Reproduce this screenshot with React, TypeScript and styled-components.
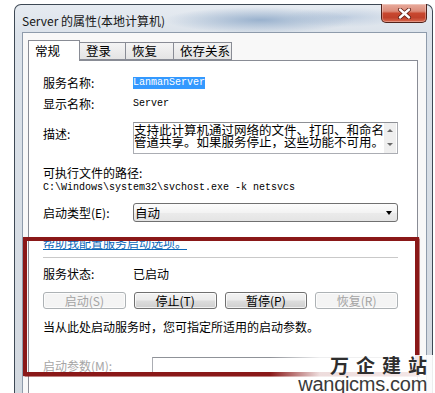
import React from "react";
import styled, { createGlobalStyle } from "styled-components";

const GlobalStyle = createGlobalStyle`
  html, body { margin: 0; padding: 0; background: #ffffff; }
  body {
    font-family: "Noto Sans CJK SC", "Noto Sans", sans-serif;
    font-size: 12px;
    color: #000;
  }
  * { box-sizing: border-box; }
`;

const Stage = styled.div`
  position: relative;
  width: 435px;
  height: 393px;
  overflow: hidden;
  background: #ffffff;
  padding: 4px 0 0 14px;
`;

const Window = styled.div`
  width: 419px;
  height: 400px;
  border: 1px solid #3e4955;
  border-bottom: none;
  border-radius: 7px 7px 0 0;
  background:
    radial-gradient(ellipse 95px 13px at 245px 15px, rgba(130, 160, 195, 0.75), rgba(130, 160, 195, 0) 100%),
    radial-gradient(ellipse 60px 10px at 330px 12px, rgba(170, 190, 215, 0.6), rgba(170, 190, 215, 0) 100%),
    linear-gradient(to bottom, #e6ebf1 0px, #dbe2ea 30px, #d2d8df 100%);
  display: flex;
  flex-direction: column;
`;

const TitleBar = styled.div`
  height: 27px;
  flex-shrink: 0;
  display: flex;
  align-items: flex-start;
  padding: 0 5px 0 7px;
`;

const Title = styled.div`
  margin-top: 8px;
  font-size: 12px;
  line-height: 16px;
  color: #151515;
  white-space: nowrap;
`;

const CloseButton = styled.div`
  margin-left: auto;
  margin-top: -1px;
  width: 46px;
  height: 19px;
  border: 1px solid #50211a;
  border-top: none;
  border-radius: 0 0 5px 5px;
  background: linear-gradient(
    to bottom,
    #e8ab9d 0%,
    #dc8c7a 40%,
    #c8472f 52%,
    #c0412b 75%,
    #d9694f 100%
  );
  box-shadow: inset 0 0 0 1px rgba(255, 255, 255, 0.3);
  display: flex;
  align-items: center;
  justify-content: center;
`;

const ClientArea = styled.div`
  flex: 1;
  margin: 0 5px 0 7px;
  border: 1px solid #8e9bab;
  border-bottom: none;
  background: #f8f8f8;
  padding: 7px 8px 0 5px;
  display: flex;
  flex-direction: column;
`;

const TabRow = styled.div`
  display: flex;
  align-items: flex-end;
  height: 21px;
  margin-bottom: -1px;
  position: relative;
  z-index: 1;
`;

const Tab = styled.div<{ $active?: boolean; $w: number }>`
  width: ${(p) => p.$w}px;
  height: ${(p) => (p.$active ? 21 : 18)}px;
  margin-bottom: ${(p) => (p.$active ? 0 : 1)}px;
  margin-right: -1px;
  border: 1px solid #898c95;
  border-bottom: ${(p) => (p.$active ? "none" : "1px solid #898c95")};
  background: ${(p) =>
    p.$active ? "#ffffff" : "linear-gradient(to bottom, #f4f4f4, #e4e4e4)"};
  padding-left: 6px;
  display: flex;
  align-items: center;
  font-size: 12.5px;
  line-height: 14px;
  color: #000;
  position: relative;
  z-index: ${(p) => (p.$active ? 2 : 1)};
`;

const Panel = styled.div`
  flex: 1;
  background: #ffffff;
  border: 1px solid #898c95;
  border-bottom: none;
  padding: 14px 19px 0 14px;
  display: flex;
  flex-direction: column;
`;

const Row = styled.div<{ $h: number; $mt?: number; $top?: boolean }>`
  display: flex;
  align-items: ${(p) => (p.$top ? "flex-start" : "center")};
  height: ${(p) => p.$h}px;
  margin-top: ${(p) => p.$mt ?? 0}px;
  flex-shrink: 0;
`;

const Label = styled.div<{ $w?: number; $disabled?: boolean; $pt?: number }>`
  width: ${(p) => (p.$w === undefined ? "90px" : `${p.$w}px`)};
  flex-shrink: 0;
  padding-top: ${(p) => p.$pt ?? 0}px;
  font-size: 12px;
  line-height: 16px;
  white-space: nowrap;
  color: ${(p) => (p.$disabled ? "#a6a6a6" : "#000")};
`;

const Mono = styled.span<{ $selected?: boolean }>`
  font-family: "Liberation Mono", "DejaVu Sans Mono", monospace;
  font-size: 10px;
  line-height: 12px;
  height: 12px;
  display: inline-block;
  white-space: pre;
  color: ${(p) => (p.$selected ? "#ffffff" : "#000")};
  background: ${(p) => (p.$selected ? "#3399ff" : "transparent")};
`;

const Value = styled.div`
  font-size: 12px;
  line-height: 16px;
  white-space: nowrap;
`;

const DescBox = styled.div`
  flex: 1;
  height: 32px;
  border: 1px solid #abadb3;
  border-top-color: #8e9095;
  background: #fff;
  display: flex;
`;

const DescText = styled.div`
  flex: 1;
  padding: 1px 0 0 0;
  font-size: 12.5px;
  line-height: 12px;
  white-space: nowrap;
`;

const ScrollBar = styled.div`
  width: 12px;
  margin-right: 1px;
  background: #efefef;
  display: flex;
  flex-direction: column;
  align-items: center;
  justify-content: space-between;
  padding: 6px 0 7px;
`;

const Arrow = styled.div<{ $dir: "up" | "down"; $color?: string }>`
  width: 0;
  height: 0;
  border-left: 3px solid transparent;
  border-right: 3px solid transparent;
  ${(p) =>
    p.$dir === "up"
      ? `border-bottom: 3px solid ${p.$color ?? "#6a6a6a"};`
      : `border-top: 3px solid ${p.$color ?? "#6a6a6a"};`}
`;

const Select = styled.div`
  flex: 1;
  height: 19px;
  border: 1px solid #707070;
  border-radius: 3px;
  background: linear-gradient(to bottom, #fcfcfc 0%, #f3f3f3 50%, #ebebeb 51%, #e4e4e4 100%);
  display: flex;
  align-items: center;
  padding: 0 5px 0 1px;
  font-size: 12.5px;
  line-height: 14px;
`;

const DropArrow = styled.div`
  margin-left: auto;
  width: 0;
  height: 0;
  border-left: 3.5px solid transparent;
  border-right: 3.5px solid transparent;
  border-top: 4px solid #000;
`;

const Link = styled.a`
  font-size: 12px;
  line-height: 14px;
  color: #0a66b8;
  text-decoration: underline;
  white-space: nowrap;
  cursor: pointer;
`;

const Separator = styled.div`
  height: 1px;
  margin-top: 7px;
  background: #c9c9c9;
  flex-shrink: 0;
`;

const ButtonGrid = styled.div`
  display: grid;
  grid-template-columns: repeat(4, 1fr);
  column-gap: 8px;
  margin-top: 10px;
  flex-shrink: 0;
`;

const Button = styled.div<{ $disabled?: boolean }>`
  height: 17px;
  border: 1px solid ${(p) => (p.$disabled ? "#adb2b5" : "#707070")};
  border-radius: 3px;
  background: ${(p) =>
    p.$disabled
      ? "#f4f4f4"
      : "linear-gradient(to bottom, #f3f3f3 0%, #ebebeb 48%, #dddddd 52%, #cfcfcf 100%)"};
  box-shadow: inset 0 0 0 1px rgba(255, 255, 255, 0.7);
  color: ${(p) => (p.$disabled ? "#a3a3a3" : "#000")};
  display: flex;
  align-items: center;
  justify-content: center;
  font-size: 12px;
  line-height: 14px;
  white-space: nowrap;
`;

const InputBox = styled.div`
  flex: 1;
  height: 18px;
  border: 1px solid #abadb3;
  border-top-color: #8f9298;
  background: #fff;
`;

const RedMark = styled.div`
  position: absolute;
  left: 23px;
  top: 237px;
  width: 396px;
  height: 139px;
  border: 4px solid #8a1818;
  box-shadow: 0 0 1px 0.5px rgba(138, 24, 24, 0.55);
  pointer-events: none;
`;

const Watermark = styled.div`
  position: absolute;
  left: 270px;
  top: 355px;
  width: 165px;
  height: 38px;
  padding-right: 8px;
  background: linear-gradient(
    to right,
    rgba(255, 255, 255, 0) 0%,
    rgba(255, 255, 255, 0.85) 30%,
    rgba(255, 255, 255, 0.9) 100%
  );
  display: flex;
  flex-direction: column;
  align-items: flex-end;
`;

const WatermarkCn = styled.div`
  font-family: "Noto Sans CJK SC", sans-serif;
  font-weight: 700;
  font-size: 19px;
  line-height: 20px;
  height: 20px;
  letter-spacing: 7px;
  margin-right: -7px;
  color: #2e2e2e;
  white-space: nowrap;
`;

const WatermarkEn = styled.div`
  font-family: "Liberation Sans", Arial, sans-serif;
  font-size: 20px;
  line-height: 18px;
  height: 18px;
  letter-spacing: -0.3px;
  color: #3a3a3a;
  white-space: nowrap;
`;

const CloseIcon = () => (
  <svg width="15" height="11" viewBox="0 0 15 11">
    <path d="M3 1.5 L12 9.5 M12 1.5 L3 9.5" stroke="#5a1a10" strokeWidth="4" strokeLinecap="round" />
    <path d="M3 1.5 L12 9.5 M12 1.5 L3 9.5" stroke="#ffffff" strokeWidth="2.4" strokeLinecap="round" />
  </svg>
);

export default function App() {
  return (
    <>
      <GlobalStyle />
      <Stage>
        <Window>
          <TitleBar>
            <Title>Server 的属性(本地计算机)</Title>
            <CloseButton>
              <CloseIcon />
            </CloseButton>
          </TitleBar>
          <ClientArea>
            <TabRow>
              <Tab $active $w={52}>常规</Tab>
              <Tab $w={47}>登录</Tab>
              <Tab $w={49}>恢复</Tab>
              <Tab $w={59}>依存关系</Tab>
            </TabRow>
            <Panel>
              <Row $h={16}>
                <Label>服务名称:</Label>
                <Mono $selected>LanmanServer</Mono>
              </Row>
              <Row $h={16} $mt={5}>
                <Label>显示名称:</Label>
                <Mono>Server</Mono>
              </Row>
              <Row $h={32} $mt={10} $top>
                <Label $pt={4}>描述:</Label>
                <DescBox>
                  <DescText>
                    支持此计算机通过网络的文件、打印、和命名
                    <br />
                    管道共享。如果服务停止，这些功能不可用。
                  </DescText>
                  <ScrollBar>
                    <Arrow $dir="up" />
                    <Arrow $dir="down" />
                  </ScrollBar>
                </DescBox>
              </Row>
              <Row $h={16} $mt={11}>
                <Label $w={200}>可执行文件的路径:</Label>
              </Row>
              <Row $h={14}>
                <Mono>C:\Windows\system32\svchost.exe -k netsvcs</Mono>
              </Row>
              <Row $h={19} $mt={8}>
                <Label>启动类型(E):</Label>
                <Select>
                  自动
                  <DropArrow />
                </Select>
              </Row>
              <Row $h={14} $mt={14}>
                <Link>帮助我配置服务启动选项。</Link>
              </Row>
              <Separator />
              <Row $h={16} $mt={8}>
                <Label>服务状态:</Label>
                <Value>已启动</Value>
              </Row>
              <ButtonGrid>
                <Button $disabled>启动(S)</Button>
                <Button>停止(T)</Button>
                <Button>暂停(P)</Button>
                <Button $disabled>恢复(R)</Button>
              </ButtonGrid>
              <Row $h={16} $mt={10}>
                <Value>当从此处启动服务时，您可指定所适用的启动参数。</Value>
              </Row>
              <Row $h={18} $mt={22}>
                <Label $w={109} $disabled>启动参数(M):</Label>
                <InputBox />
              </Row>
            </Panel>
          </ClientArea>
        </Window>
        <RedMark />
        <Watermark>
          <WatermarkCn>万企建站</WatermarkCn>
          <WatermarkEn>wanqicms.com</WatermarkEn>
        </Watermark>
      </Stage>
    </>
  );
}
